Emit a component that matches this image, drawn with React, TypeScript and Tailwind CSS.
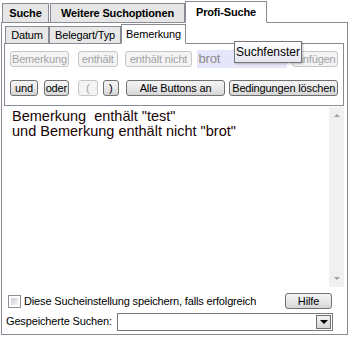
import React from "react";

const font = "font-['Tahoma','Liberation_Sans',sans-serif]";

function Btn({ children, disabled, className = "" }: { children: React.ReactNode; disabled?: boolean; className?: string }) {
    return (
        <div
            className={`h-[16px] flex items-center justify-center rounded-[3px] border text-[11px] leading-none ${
                disabled
                    ? "border-[#c3c6c9] bg-[#f4f4f4] text-[#a3a3a3]"
                    : "border-[#707070] bg-gradient-to-b from-[#f4f4f4] via-[#e9e9e9] to-[#d5d5d5] text-black"
            } ${className}`}
        >
            {children}
        </div>
    );
}

function OuterTab({ label, active, className = "" }: { label: string; active?: boolean; className?: string }) {
    return (
        <div
            className={`flex items-center justify-center border border-[#898c95] text-[11px] font-bold ${
                active ? "h-[22px] bg-white border-b-white -mb-px z-10 relative" : "h-[19px] bg-[#e6e6e6] border-b-0"
            } ${className}`}
        >
            {label}
        </div>
    );
}

function InnerTab({ label, active, className = "" }: { label: string; active?: boolean; className?: string }) {
    return (
        <div
            className={`flex items-center justify-center border border-[#898c95] text-[11px] ${
                active ? "h-[20px] bg-white border-b-white -mb-px z-10 relative" : "h-[17px] bg-[#e8e8e8] border-b-0"
            } ${className}`}
        >
            {label}
        </div>
    );
}

export default function App() {
    return (
        <div className={`w-[350px] h-[337px] bg-white relative overflow-hidden text-black tracking-[-0.15px] ${font}`}>
            {/* outer tabs */}
            <div className="flex items-end h-[22px] pl-[2px]">
                <OuterTab label="Suche" className="w-[47px]" />
                <OuterTab label="Weitere Suchoptionen" className="w-[135px] ml-[1px]" />
                <OuterTab label="Profi-Suche" active className="w-[82px]" />
            </div>
            <div className="ml-[1px] w-[347px] h-[313px] border border-[#898c95] flex flex-col">
                {/* inner tabs */}
                <div className="flex items-end h-[19px] pl-[3px] mt-[1px]">
                    <InnerTab label="Datum" className="w-[44px]" />
                    <InnerTab label="Belegart/Typ" className="w-[72px]" />
                    <InnerTab label="Bemerkung" active className="w-[65px]" />
                </div>
                <div className="ml-[2px] w-[340px] h-[63px] border border-[#898c95] flex flex-col px-[5px] pt-[6px] relative">
                    <div className="flex items-center h-[18px]">
                        <Btn disabled className="w-[59px]">Bemerkung</Btn>
                        <Btn disabled className="w-[40px] ml-[9px]">enthält</Btn>
                        <Btn disabled className="w-[68px] ml-[7px]">enthält nicht</Btn>
                        <div className="w-[90px] h-[18px] ml-[5px] bg-[#e6e6fa] text-[#8a8a8a] text-[13px] leading-[18px] pl-[1px]">brot</div>
                        <Btn disabled className="w-[46px] ml-[5px]">einfügen</Btn>
                    </div>
                    <div className="flex items-center h-[16px] mt-[12px]">
                        <Btn className="w-[28px]">und</Btn>
                        <Btn className="w-[25px] ml-[6px]">oder</Btn>
                        <Btn disabled className="w-[20px] ml-[9px]">(</Btn>
                        <Btn className="w-[16px] ml-[5px]">)</Btn>
                        <Btn className="w-[100px] ml-[7px]">Alle Buttons an</Btn>
                        <Btn className="w-[109px] ml-[4px]">Bedingungen löschen</Btn>
                    </div>
                    {/* tooltip */}
                    <div className="absolute left-[229px] top-[-3px] h-[22px] w-[68px] border border-[#767676] bg-gradient-to-b from-white to-[#e4e5f0] text-[12px] tracking-normal flex items-center justify-center shadow-[1px_1px_2px_rgba(0,0,0,0.25)] z-20">
                        Suchfenster
                    </div>
                </div>
                {/* text area */}
                <div className="ml-[2px] w-[340px] h-[181px] flex">
                    <div className="flex-1 pl-[8px] pt-[3px] text-[14.5px] leading-[15px] tracking-normal text-[#1a0505]">
                        <div className="whitespace-pre">Bemerkung  enthält "test"</div>
                        <div className="whitespace-pre">und Bemerkung enthält nicht "brot"</div>
                    </div>
                    <div className="w-[15px] h-[180px] mt-[1px] bg-[#f0f0f0] flex flex-col items-center justify-between py-[7px]">
                        <div className="w-0 h-0 border-l-[3px] border-r-[3px] border-b-[3px] border-l-transparent border-r-transparent border-b-[#a0a0a0]" />
                        <div className="w-0 h-0 border-l-[3px] border-r-[3px] border-t-[3px] border-l-transparent border-r-transparent border-t-[#a0a0a0]" />
                    </div>
                </div>
                {/* bottom controls */}
                <div className="flex items-center h-[18px] mt-[5px] pl-[6px] pr-[15px]">
                    <div className="w-[13px] h-[13px] border border-[#8e8f8f] bg-white p-[2px]">
                        <div className="w-full h-full bg-gradient-to-br from-[#cbcfd5] to-[#f6f6f6]" />
                    </div>
                    <span className="ml-[3px] text-[11px] flex-1">Diese Sucheinstellung speichern, falls erfolgreich</span>
                    <Btn className="w-[47px] h-[15px]">Hilfe</Btn>
                </div>
                <div className="flex items-center h-[19px] mt-[2px] pl-[4px]">
                    <span className="text-[11px] w-[111px]">Gespeicherte Suchen:</span>
                    <div className="w-[216px] h-[18px] border border-[#7a7a7a] bg-white flex justify-end items-center pr-[1px]">
                        <div className="w-[15px] h-[14px] border border-[#707070] bg-gradient-to-b from-[#f4f4f4] to-[#d6d6d6] flex items-center justify-center">
                            <div className="w-0 h-0 border-l-[4px] border-r-[4px] border-t-[4px] border-l-transparent border-r-transparent border-t-black" />
                        </div>
                    </div>
                </div>
            </div>
        </div>
    );
}
